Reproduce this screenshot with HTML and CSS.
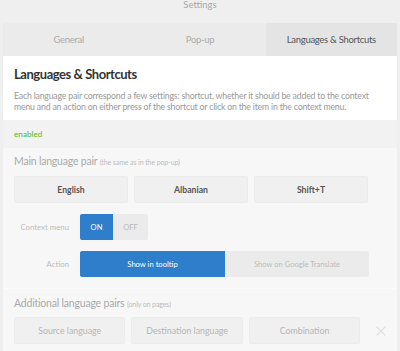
FILE: index.html
```html
<!DOCTYPE html>
<html lang="en">
<head>
  <meta charset="UTF-8" />
  <title>Settings</title>
  <link rel="stylesheet" href="styles.css">
</head>
<body>

<div class="title">Settings</div>

<div class="tabs">
  <div class="tab">General</div>
  <div class="tab">Pop-up</div>
  <div class="tab active">Languages &amp; Shortcuts</div>
</div>

<div class="intro">
  <h3>Languages &amp; Shortcuts</h3>
  <p>Each language pair correspond a few settings: shortcut, whether it should be added to the context menu and an action on either press of the shortcut or click on the item in the context menu.</p>
</div>

<div class="status">enabled</div>

<div class="section">
  <div class="section-title">Main language pair <small>(the same as in the pop-up)</small></div>
  <div class="pair">
    <button class="btn strong">English</button>
    <button class="btn strong">Albanian</button>
    <button class="btn strong">Shift+T</button>
  </div>

  <div class="row">
    <span class="row-label">Context menu</span>
    <div class="switch">
      <button class="opt on">ON</button>
      <button class="opt">OFF</button>
    </div>
  </div>

  <div class="row">
    <span class="row-label">Action</span>
    <div class="switch wide">
      <button class="opt on">Show in tooltip</button>
      <button class="opt">Show on Google Translate</button>
    </div>
  </div>
</div>

<div class="section extra">
  <div class="section-title">Additional language pairs <small>(only on pages)</small></div>
  <div class="pair">
    <button class="btn">Source language</button>
    <button class="btn">Destination language</button>
    <button class="btn">Combination</button>
    <svg class="remove" width="10" height="10" viewBox="0 0 10 10">
      <path d="M0.5 0.5 L9.5 9.5 M9.5 0.5 L0.5 9.5" stroke="#dcdcdc" stroke-width="1.1" fill="none"/>
    </svg>
  </div>
</div>

</body>
</html>
```

FILE: styles.css
```css
body {
  font-family: Lato, sans-serif;
  background-color: #efefef;
  margin: 0;
  padding: 0 3px;
  height: 351px;
  overflow: hidden;
}

.title {
  text-align: center;
  font-size: 9.5px;
  color: #a8a8a8;
  height: 23px;
  line-height: 10px;
}

.tabs {
  display: flex;
  height: 33px;
  background-color: #ebebeb;
}

.tab {
  flex: 1;
  display: flex;
  align-items: center;
  justify-content: center;
  font-size: 9.5px;
  letter-spacing: -0.3px;
  color: #aaa;
}

.tab.active {
  background-color: #e4e4e4;
  color: #555;
}

.intro {
  background-color: #ffffff;
  padding: 10px 20px 0 11px;
  height: 54px;
}

h3 {
  margin: 0 0 8px;
  font-size: 13px;
  letter-spacing: -0.45px;
  font-weight: 700;
  color: #333;
}

.intro p {
  margin: 0;
  font-size: 8.75px;
  letter-spacing: -0.2px;
  line-height: 11px;
  color: #999;
}

.status {
  background-color: #f2f2f2;
  height: 28px;
  line-height: 28px;
  padding-left: 11px;
  font-size: 8.2px;
  color: #52b825;
}

.section {
  background-color: #f7f7f7;
  padding: 7px 11px 11px;
  border-bottom: 1px solid #fbfbfb;
}

.section-title {
  font-size: 10.5px;
  letter-spacing: -0.2px;
  color: #aaa;
  height: 21px;
}

.section-title small {
  font-size: 7px;
  letter-spacing: -0.1px;
  color: #bbb;
}

.pair {
  display: flex;
  gap: 6px;
  align-items: center;
}

.btn {
  width: 114px;
  height: 27px;
  border: 1px solid #ececec;
  border-radius: 2px;
  background-color: #f0f0f0;
  font-family: inherit;
  font-size: 8.8px;
  color: #b5b5b5;
  padding: 0;
}

.btn.strong {
  font-size: 8.7px;
  font-weight: 700;
  color: #555;
}

.row {
  display: flex;
  align-items: center;
  margin-top: 11px;
}

.row-label {
  width: 55px;
  text-align: right;
  margin-right: 11px;
  font-size: 7.8px;
  color: #bbb;
  white-space: nowrap;
}

.switch {
  display: flex;
  height: 26px;
  border-radius: 2px;
  overflow: hidden;
}

.opt {
  border: none;
  padding: 0;
  width: 35px;
  background-color: #ebebeb;
  font-family: inherit;
  font-size: 7.6px;
  color: #bbb;
}

.opt.on {
  width: 33px;
  background-color: #2e7ecc;
  color: #fff;
}

.switch.wide .opt {
  width: 144px;
}

.switch.wide .opt.on {
  width: 145px;
}

.extra {
  padding-top: 8px;
}

.extra .section-title {
  height: 20px;
}

.remove {
  margin-left: 10px;
}
```
